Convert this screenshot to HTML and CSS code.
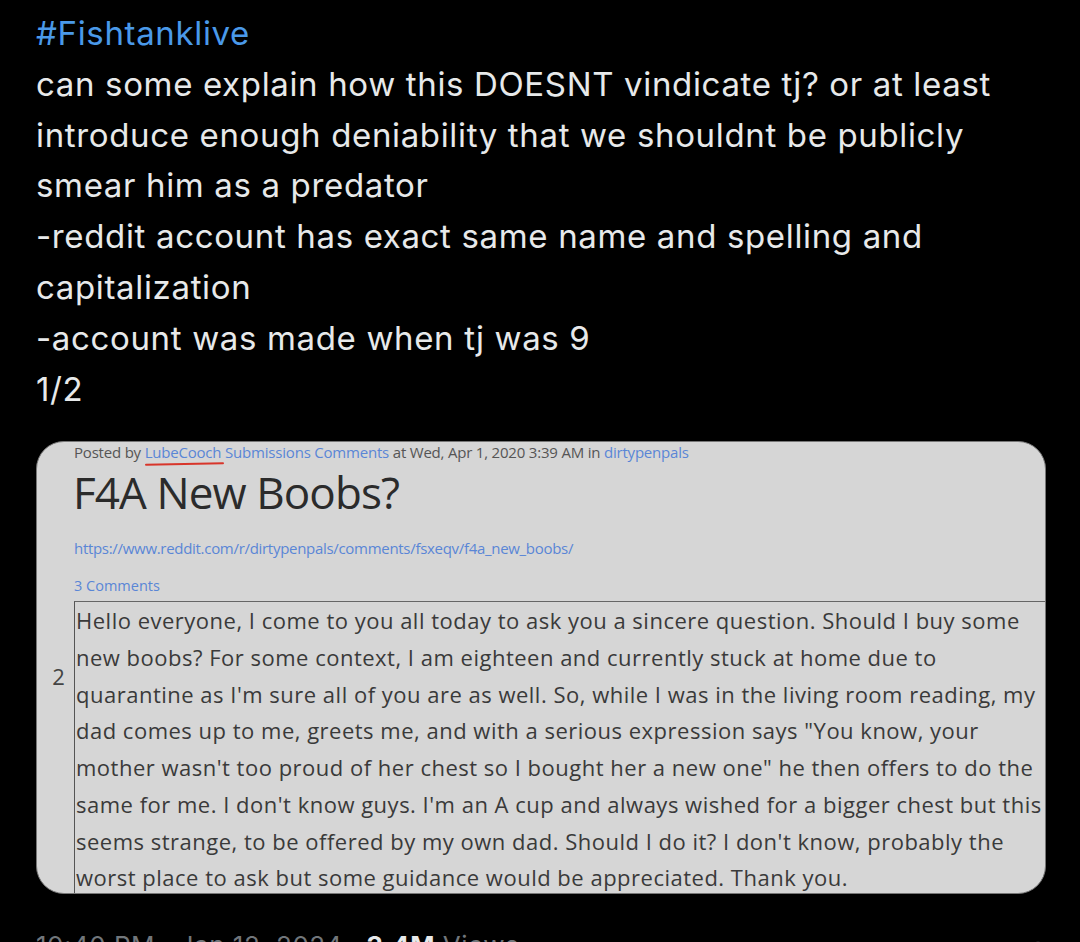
FILE: index.html
```html
<!DOCTYPE html>
<html>
<head>
<meta charset="utf-8">
<link rel="stylesheet" href="styles.css">
</head>
<body>
<article class="tweet">
  <div class="tweet-text">
    <p class="line"><a class="hashtag">#Fishtanklive</a></p>
    <p class="line">can some explain how this DOESNT vindicate tj? or at least introduce enough deniability that we shouldnt be publicly smear him as a predator</p>
    <p class="line">-reddit account has exact same name and spelling and capitalization</p>
    <p class="line">-account was made when tj was 9</p>
    <p class="line">1/2</p>
  </div>

  <div class="media">
    <div class="meta">Posted by <a class="lnk user">LubeCooch</a> <a class="lnk">Submissions</a> <a class="lnk">Comments</a> at Wed, Apr 1, 2020 3:39 AM in <a class="lnk">dirtypenpals</a></div>
    <h1 class="title">F4A New Boobs?</h1>
    <div class="url lnk">https://www.reddit.com/r/dirtypenpals/comments/fsxeqv/f4a_new_boobs/</div>
    <div class="count lnk">3 Comments</div>
    <div class="body-row">
      <div class="lineno">2</div>
      <div class="selftext">
        <span class="sl">Hello everyone, I come to you all today to ask you a sincere question. Should I buy some</span>
        <span class="sl">new boobs? For some context, I am eighteen and currently stuck at home due to</span>
        <span class="sl">quarantine as I'm sure all of you are as well. So, while I was in the living room reading, my</span>
        <span class="sl">dad comes up to me, greets me, and with a serious expression says "You know, your</span>
        <span class="sl">mother wasn't too proud of her chest so I bought her a new one" he then offers to do the</span>
        <span class="sl">same for me. I don't know guys. I'm an A cup and always wished for a bigger chest but this</span>
        <span class="sl">seems strange, to be offered by my own dad. Should I do it? I don't know, probably the</span>
        <span class="sl">worst place to ask but some guidance would be appreciated. Thank you.</span>
      </div>
    </div>
  </div>

  <div class="footer">
    <span class="time">10:40 PM · Jan 12, 2024 · <b class="views">3.4M</b> Views</span>
    <span class="icon" aria-hidden="true">
      <svg width="36" height="36" viewBox="0 0 36 36"><circle cx="24" cy="18" r="9" fill="none" stroke="#71767b" stroke-width="2.5"/><rect x="20" y="12" width="8" height="2.5" fill="#71767b"/><circle cx="8" cy="13" r="1.6" fill="#71767b"/></svg>
    </span>
  </div>
</article>
</body>
</html>
```

FILE: styles.css
```css
html, body {
  margin: 0;
  padding: 0;
  background: #000;
}
body {
  width: 1080px;
  height: 942px;
  overflow: hidden;
}
.tweet {
  padding: 8px 34px 0 36px;
  font-family: Inter, "Noto Sans", "Liberation Sans", sans-serif;
  color: #e7e9ea;
}
.tweet-text {
  font-size: 33px;
  line-height: 50.8px;
  letter-spacing: 0.65px;
}
.line {
  margin: 0;
}
.hashtag {
  color: #4a99e9;
}
.media {
  margin-top: 27px;
  height: 453px;
  box-sizing: border-box;
  border: 1.5px solid #777;
  border-radius: 28px;
  background: #d6d6d6;
  overflow: hidden;
  display: flex;
  flex-direction: column;
  font-family: "Open Sans", "Noto Sans", sans-serif;
  color: #3a3a3a;
}
.meta {
  margin: 0 0 0 37px;
  font-size: 15px;
  line-height: 20px;
  color: #555;
  letter-spacing: -0.2px;
}
.lnk {
  color: #5a86d6;
}
.user {
  position: relative;
}
.user::after {
  content: "";
  position: absolute;
  left: 0;
  right: -2px;
  bottom: -3px;
  height: 2px;
  background: #d8352a;
  border-radius: 1px;
  transform: rotate(-1deg);
}
.title {
  margin: 3px 0 0 36px;
  font-size: 44px;
  line-height: 54px;
  font-weight: 400;
  color: #2b2b2b;
  letter-spacing: -0.9px;
}
.url {
  margin: 19px 0 0 37px;
  font-size: 15px;
  line-height: 20px;
  letter-spacing: -0.3px;
}
.count {
  margin: 18px 0 0 37px;
  font-size: 14.5px;
  line-height: 20px;
}
.body-row {
  display: flex;
  margin-top: 5px;
}
.lineno {
  width: 37px;
  padding-top: 61px;
  text-align: center;
  font-size: 22px;
  line-height: 28px;
  color: #444;
  flex: none;
  padding-left: 6px;
  box-sizing: border-box;
}
.selftext {
  flex: none;
  width: 1100px;
  border-left: 1.5px solid #555;
  border-top: 1.5px solid #666;
  padding: 0 0 0 1px;
  font-size: 22px;
  letter-spacing: 0.5px;
  line-height: 36.7px;
  color: #3a3a3a;
}
.sl {
  display: block;
  white-space: nowrap;
}
.footer {
  display: flex;
  justify-content: space-between;
  align-items: flex-start;
  margin-top: 34px;
  font-size: 26px;
  line-height: 36px;
  letter-spacing: 0.5px;
  color: #71767b;
}
.views {
  color: #e7e9ea;
  font-weight: 700;
}
.icon {
  display: block;
  margin-top: 6px;
  margin-right: -4px;
}
```
